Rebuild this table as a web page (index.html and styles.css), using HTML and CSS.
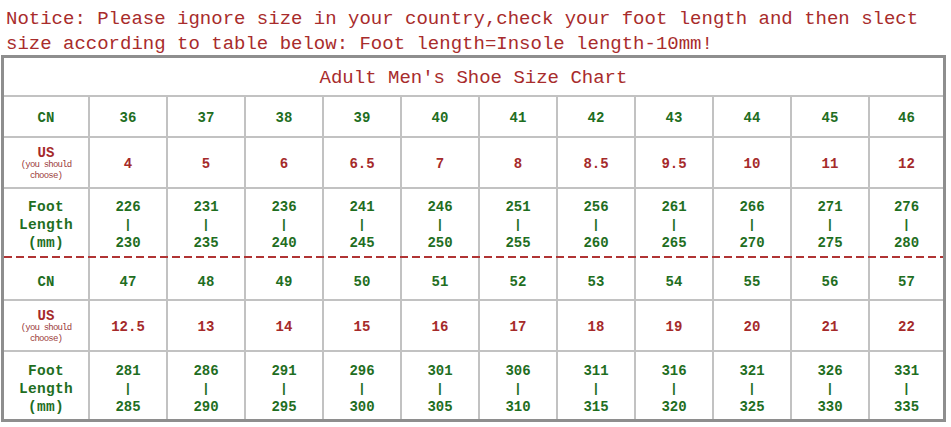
FILE: index.html
```html
<!DOCTYPE html>
<html>
<head>
<meta charset="utf-8">
<link rel="stylesheet" href="styles.css">
</head>
<body>
<div class="notice">Notice: Please ignore size in your country,check your foot length and then slect<br>size according to table below: Foot length=Insole length-10mm!</div>
<div class="chart">
  <div class="title">Adult Men's Shoe Size Chart</div>

  <div class="row cn">
    <div class="cell green">CN</div>
    <div class="cell green">36</div><div class="cell green">37</div><div class="cell green">38</div><div class="cell green">39</div><div class="cell green">40</div><div class="cell green">41</div><div class="cell green">42</div><div class="cell green">43</div><div class="cell green">44</div><div class="cell green">45</div><div class="cell green">46</div>
  </div>
  <div class="row us">
    <div class="cell red label-us"><span class="us-big">US</span><span class="us-small">(you should<br>choose)</span></div>
    <div class="cell red">4</div><div class="cell red">5</div><div class="cell red">6</div><div class="cell red">6.5</div><div class="cell red">7</div><div class="cell red">8</div><div class="cell red">8.5</div><div class="cell red">9.5</div><div class="cell red">10</div><div class="cell red">11</div><div class="cell red">12</div>
  </div>
  <div class="row foot">
    <div class="cell green label-foot">Foot<br>Length<br>(mm)</div>
    <div class="cell green">226<span class="bar">|</span>230</div>
    <div class="cell green">231<span class="bar">|</span>235</div>
    <div class="cell green">236<span class="bar">|</span>240</div>
    <div class="cell green">241<span class="bar">|</span>245</div>
    <div class="cell green">246<span class="bar">|</span>250</div>
    <div class="cell green">251<span class="bar">|</span>255</div>
    <div class="cell green">256<span class="bar">|</span>260</div>
    <div class="cell green">261<span class="bar">|</span>265</div>
    <div class="cell green">266<span class="bar">|</span>270</div>
    <div class="cell green">271<span class="bar">|</span>275</div>
    <div class="cell green">276<span class="bar">|</span>280</div>
  </div>

  <div class="dash"></div>

  <div class="row cn cn2">
    <div class="cell green">CN</div>
    <div class="cell green">47</div><div class="cell green">48</div><div class="cell green">49</div><div class="cell green">50</div><div class="cell green">51</div><div class="cell green">52</div><div class="cell green">53</div><div class="cell green">54</div><div class="cell green">55</div><div class="cell green">56</div><div class="cell green">57</div>
  </div>
  <div class="row us">
    <div class="cell red label-us"><span class="us-big">US</span><span class="us-small">(you should<br>choose)</span></div>
    <div class="cell red">12.5</div><div class="cell red">13</div><div class="cell red">14</div><div class="cell red">15</div><div class="cell red">16</div><div class="cell red">17</div><div class="cell red">18</div><div class="cell red">19</div><div class="cell red">20</div><div class="cell red">21</div><div class="cell red">22</div>
  </div>
  <div class="row foot foot2">
    <div class="cell green label-foot">Foot<br>Length<br>(mm)</div>
    <div class="cell green">281<span class="bar">|</span>285</div>
    <div class="cell green">286<span class="bar">|</span>290</div>
    <div class="cell green">291<span class="bar">|</span>295</div>
    <div class="cell green">296<span class="bar">|</span>300</div>
    <div class="cell green">301<span class="bar">|</span>305</div>
    <div class="cell green">306<span class="bar">|</span>310</div>
    <div class="cell green">311<span class="bar">|</span>315</div>
    <div class="cell green">316<span class="bar">|</span>320</div>
    <div class="cell green">321<span class="bar">|</span>325</div>
    <div class="cell green">326<span class="bar">|</span>330</div>
    <div class="cell green">331<span class="bar">|</span>335</div>
  </div>
</div>
</body>
</html>
```

FILE: styles.css
```css
html, body {
  margin: 0;
  padding: 0;
  background: #ffffff;
}

body {
  font-family: "Liberation Mono", "DejaVu Sans Mono", monospace;
}

.notice {
  box-sizing: border-box;
  height: 55px;
  padding: 7px 0 0 6px;
  font-size: 19px;
  line-height: 25px;
  color: #a82c2c;
  white-space: nowrap;
}

.chart {
  margin-left: 1px;
  width: 945px;
  box-sizing: border-box;
  border: 3px solid #8e8e8e;
  display: flex;
  flex-direction: column;
}

.title {
  box-sizing: border-box;
  height: 39px;
  padding-top: 3px;
  border-bottom: 2px solid #c2c2c2;
  display: flex;
  align-items: center;
  justify-content: center;
  font-size: 19px;
  color: #a82c2c;
}

.row {
  display: grid;
  grid-template-columns: 86px repeat(10, 78px) 73px;
}

.cell {
  box-sizing: border-box;
  border-right: 2px solid #c2c2c2;
  border-bottom: 2px solid #c2c2c2;
  display: flex;
  flex-direction: column;
  align-items: center;
  justify-content: center;
  text-align: center;
  font-weight: bold;
  font-size: 14px;
  padding-top: 3px;
}

.cell:last-child {
  border-right: none;
}

.cn { height: 41px; }
.cn2 { height: 43px; }
.cn2 .cell { padding-top: 6px; }
.us { height: 51px; }
.foot { height: 67px; }
.foot .cell {
  border-bottom: none;
  line-height: 18px;
  padding-top: 5px;
}
.foot2 .cell { padding-top: 7px; }

.green { color: #1f6e1f; }
.red { color: #a52a2a; }

.bar {
  display: block;
  font-size: 13px;
  line-height: 18px;
}

.label-us {
  line-height: 11px;
  padding-top: 2px;
}

.us-big {
  font-size: 14px;
  line-height: 14px;
}

.us-small {
  font-size: 9px;
  letter-spacing: -0.8px;
  font-weight: normal;
  line-height: 11px;
  color: #9a3a3a;
}

.label-foot {
  font-size: 14.5px;
  letter-spacing: 0.3px;
}

.dash {
  height: 2px;
  background: repeating-linear-gradient(90deg, #b03434 0 8px, transparent 8px 12px);
}
```
